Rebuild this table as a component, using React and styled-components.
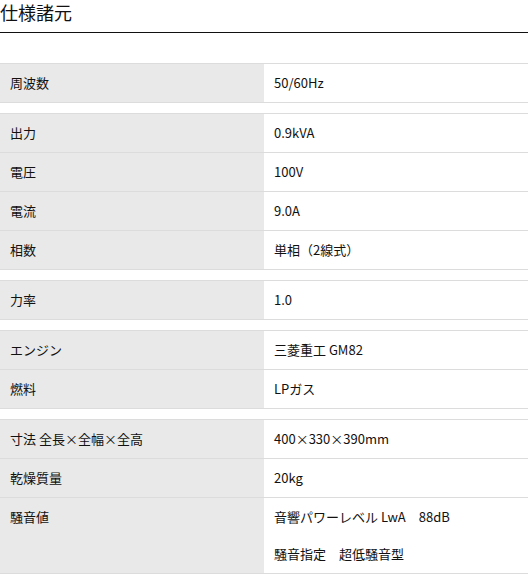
import React from "react";
import styled, { createGlobalStyle } from "styled-components";

const Global = createGlobalStyle`
  html, body { margin: 0; padding: 0; background: #fff; }
  body {
    font-family: "Noto Sans CJK JP", "Noto Sans", sans-serif;
    color: #111;
  }
  *, *::before, *::after { box-sizing: border-box; }
`;

const Page = styled.div`
  width: 528px;
`;

const Title = styled.h2`
  margin: 0 0 30px;
  padding: 0 0 8px;
  font-size: 18px;
  line-height: 24px;
  font-weight: 400;
  color: #111;
  border-bottom: 1px solid #111;
`;

const Table = styled.table`
  width: 100%;
  border-collapse: collapse;
  table-layout: fixed;
  margin: 0 0 10px;
  border-top: 1px solid #dcdcdc;
  border-bottom: 1px solid #dcdcdc;
`;

const Row = styled.tr`
  & + & { border-top: 1px solid #dcdcdc; }
`;

const Label = styled.th`
  width: 50%;
  background: #e9e9e9;
  padding: 10px 10px;
  font-size: 13px;
  line-height: 18px;
  font-weight: 400;
  text-align: left;
  vertical-align: top;
  color: #111;
`;

const Value = styled.td`
  padding: 10px 10px;
  font-size: 13px;
  line-height: 18px;
  vertical-align: top;
  color: #111;
`;

const Line = styled.p`
  margin: 0;
  & + & { margin-top: 19px; }
`;

const groups = [
  [["周波数", "50/60Hz"]],
  [
    ["出力", "0.9kVA"],
    ["電圧", "100V"],
    ["電流", "9.0A"],
    ["相数", "単相（2線式）"],
  ],
  [["力率", "1.0"]],
  [
    ["エンジン", "三菱重工 GM82"],
    ["燃料", "LPガス"],
  ],
  [
    ["寸法 全長×全幅×全高", "400×330×390mm"],
    ["乾燥質量", "20kg"],
    ["騒音値", ["音響パワーレベル LwA　88dB", "騒音指定　超低騒音型"]],
  ],
];

export default function App() {
  return (
    <Page>
      <Global />
      <Title>仕様諸元</Title>
      {groups.map((g, i) => (
        <Table key={i}>
          <tbody>
            {g.map(([k, v]) => (
              <Row key={k}>
                <Label>{k}</Label>
                <Value>
                  {Array.isArray(v)
                    ? v.map((t) => <Line key={t}>{t}</Line>)
                    : v}
                </Value>
              </Row>
            ))}
          </tbody>
        </Table>
      ))}
    </Page>
  );
}
